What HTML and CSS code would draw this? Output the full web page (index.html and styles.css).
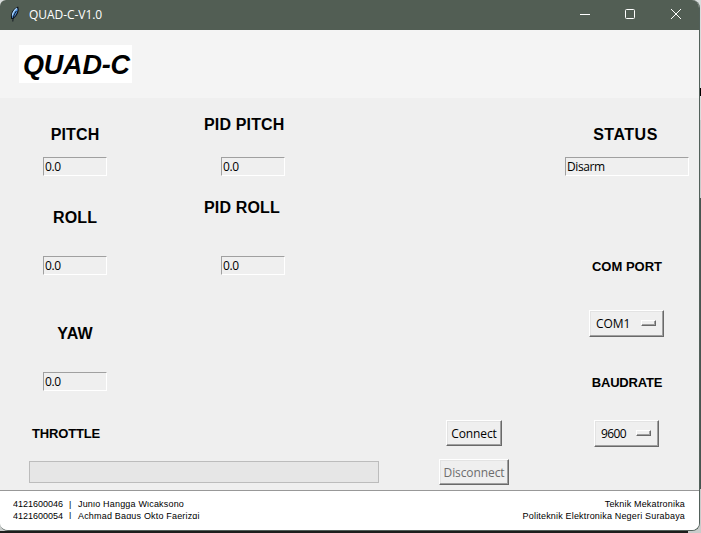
FILE: index.html
```html
<!DOCTYPE html>
<html lang="en">
<head>
<meta charset="utf-8">
<title>QUAD-C-V1.0</title>
<link rel="stylesheet" href="styles.css">
</head>
<body>
<div class="window">
  <div class="titlebar">
    <svg class="feather" width="12" height="16" viewBox="0 0 12 16">
      <path d="M2.6 12.5 C1.6 8 4 3 8.8 1.2 C10 4 8.4 9.5 4 12.5Z" fill="#4f8fdd" stroke="#10151c" stroke-width="1.1"/>
      <path d="M3.3 9.5 C4 6 6 3.4 7.8 2.2" stroke="#b4dcff" stroke-width="1.2" fill="none"/>
      <path d="M3.8 15.5 C3.8 12 5 8 7.4 5" stroke="#121820" stroke-width="1" fill="none"/>
    </svg>
    <span class="title">QUAD-C-V1.0</span>
    <svg class="controls" width="104" height="12" viewBox="0 0 104 12" fill="none" stroke="#fff">
      <path d="M0 6.5H10"/>
      <rect x="45.5" y="1.5" width="9" height="9" rx="1"/>
      <path d="M91 1L101 11M101 1L91 11"/>
    </svg>
  </div>
  <header class="header"><div class="logo"><span>QUAD-C</span></div></header>
  <main class="main">
    <section class="telemetry">
      <div class="readings">
        <div class="axes">
          <h2 class="label pitch">PITCH</h2><div class="field">0.0</div>
          <h2 class="label roll">ROLL</h2><div class="field low">0.0</div>
          <h2 class="label yaw">YAW</h2><div class="field low">0.0</div>
        </div>
        <div class="pid">
          <h2 class="label pid-pitch">PID PITCH</h2><div class="field">0.0</div>
          <h2 class="label pid-roll">PID ROLL</h2><div class="field low">0.0</div>
        </div>
      </div>
      <h3 class="small throttle">THROTTLE</h3>
      <div class="progress"></div>
    </section>
    <section class="actions">
      <button class="button connect">Connect</button>
      <button class="button disconnect" disabled>Disconnect</button>
    </section>
    <section class="link">
      <h2 class="label status">STATUS</h2>
      <div class="field wide">Disarm</div>
      <h3 class="small port">COM PORT</h3>
      <button class="button menu com"><span class="com-text">COM1</span><i class="knob"></i></button>
      <h3 class="small baud">BAUDRATE</h3>
      <button class="button menu rate"><span class="rate-text">9600</span><i class="knob"></i></button>
    </section>
  </main>
  <footer class="footer">
    <div class="authors">
      <p><span class="number">4121600046</span><span class="bar">|</span><span class="name">Junio Hangga Wicaksono</span></p>
      <p><span class="number">4121600054</span><span class="bar">|</span><span class="name">Achmad Bagus Okto Faerizqi</span></p>
    </div>
    <div class="school"><p class="dept">Teknik Mekatronika</p><p class="campus">Politeknik Elektronika Negeri Surabaya</p></div>
  </footer>
</div>
</body>
</html>
```
FILE: styles.css
```css
* { box-sizing: border-box; margin: 0; padding: 0; }
body {
  width: 701px; height: 533px; overflow: hidden; padding-right: 1px;
  font: 12px "Open Sans", "Noto Sans", sans-serif; color: #000; white-space: nowrap;
  background:
    linear-gradient(#000, #000) 700px 88px / 1px 8px no-repeat,
    linear-gradient(#1c1e1c, #1c1e1c) 0 531px / 688px 2px no-repeat,
    linear-gradient(#d9dddc 0 120px, #c8cccb 120px 198px, #465550 198px 489px, #c9cccb 489px);
}
.window {
  width: 700px; height: 531px; overflow: hidden; display: flex; flex-direction: column;
  border: solid #52605a; border-width: 0 1px 1px 0; border-radius: 6px 8px 8px 8px; background: #efefef;
}
.titlebar { height: 30px; flex: none; display: flex; align-items: center; background: #525e54; color: #fff; padding-left: 9px; }
.feather { margin-top: -3px; }
.title { margin-left: 8px; letter-spacing: -.05px; line-height: 28px; }
.controls { margin-left: auto; margin-right: 15px; margin-top: -2px; }
.header { height: 68px; flex: none; background: #f4f4f4; padding: 15px 0 0 19px; }
.logo { width: 113px; height: 38px; background: #fff; padding-left: 4px; font: italic bold 27px/41px "Liberation Sans", sans-serif; letter-spacing: -.2px; }
.main { height: 392px; flex: none; display: flex; }
.telemetry { width: 379px; }
.readings { display: flex; height: 325px; }
.axes { width: 150px; display: flex; flex-direction: column; align-items: center; }
.pid { margin-left: 54px; }
.label { font: bold 16px/22px "Liberation Sans", sans-serif; height: 20px; letter-spacing: .15px; }
.pitch, .status { margin-top: 26px; }
.status { letter-spacing: .5px; margin-right: 3px; }
.roll { margin-top: 31px; }
.yaw { margin-top: 48px; }
.pid-pitch { margin-top: 16px; }
.pid-roll { margin-top: 21px; }
.field {
  width: 64px; height: 19px; margin-top: 13px; padding-left: 1px; line-height: 18px; letter-spacing: -.4px;
  border: 1px solid; border-color: #a0a0a0 #fff #fff #a0a0a0;
}
.low { margin-top: 29px; }
.pid .field { margin-left: 17px; margin-top: 23px; }
.pid .low { margin-top: 39px; }
.small { font: bold 13px/22px "Liberation Sans", sans-serif; height: 20px; }
.throttle { margin-left: 32px; letter-spacing: -.15px; }
.progress { width: 350px; height: 22px; margin: 18px 0 0 29px; background: #e6e6e6; border: 1px solid #bcbcbc; }
.actions { width: 70px; margin-left: 60px; padding-top: 322px; display: flex; flex-direction: column; align-items: center; }
.button {
  height: 26px; font: inherit; color: #000; background: #efefef; border: 1px solid; border-color: #fff #696969 #696969 #fff;
  box-shadow: inset -1px -1px #a0a0a0, inset 1px 1px #e3e3e3; line-height: 23px; text-align: center; letter-spacing: -.1px;
}
.connect { width: 56px; }
.disconnect { width: 70px; margin-top: 13px; color: #6d6d6d; }
.link { width: 124px; margin-left: 56px; display: flex; flex-direction: column; align-items: center; }
.wide { width: 124px; letter-spacing: -.4px; }
.port { margin-top: 80px; }
.baud { margin-top: 35px; letter-spacing: -.2px; }
.menu { height: 27px; display: flex; align-items: center; justify-content: space-between; padding: 0 7px 0 6px; margin-right: 1px; }
.com { width: 75px; margin-top: 34px; }
.rate { width: 65px; margin-top: 28px; }
.knob { width: 15px; height: 6px; border: 1px solid; border-color: #fff #696969 #696969 #fff; box-shadow: inset -1px -1px #a0a0a0; margin-top: -1px; }
.rate-text { letter-spacing: -.6px; }
.footer {
  flex: 1; display: flex; justify-content: space-between; padding: 7px 14px 0 13px;
  background: #fff; border-top: 1px solid #989898; font: 9px/12px "Liberation Sans", sans-serif; letter-spacing: .18px;
}
.authors { height: 18px; margin-top: 3px; overflow: hidden; }
.authors p { display: flex; }
.authors p:first-child { margin-top: -3px; }
.number { width: 56px; letter-spacing: 0; }
.bar { width: 9px; }
.school { text-align: right; }
```
